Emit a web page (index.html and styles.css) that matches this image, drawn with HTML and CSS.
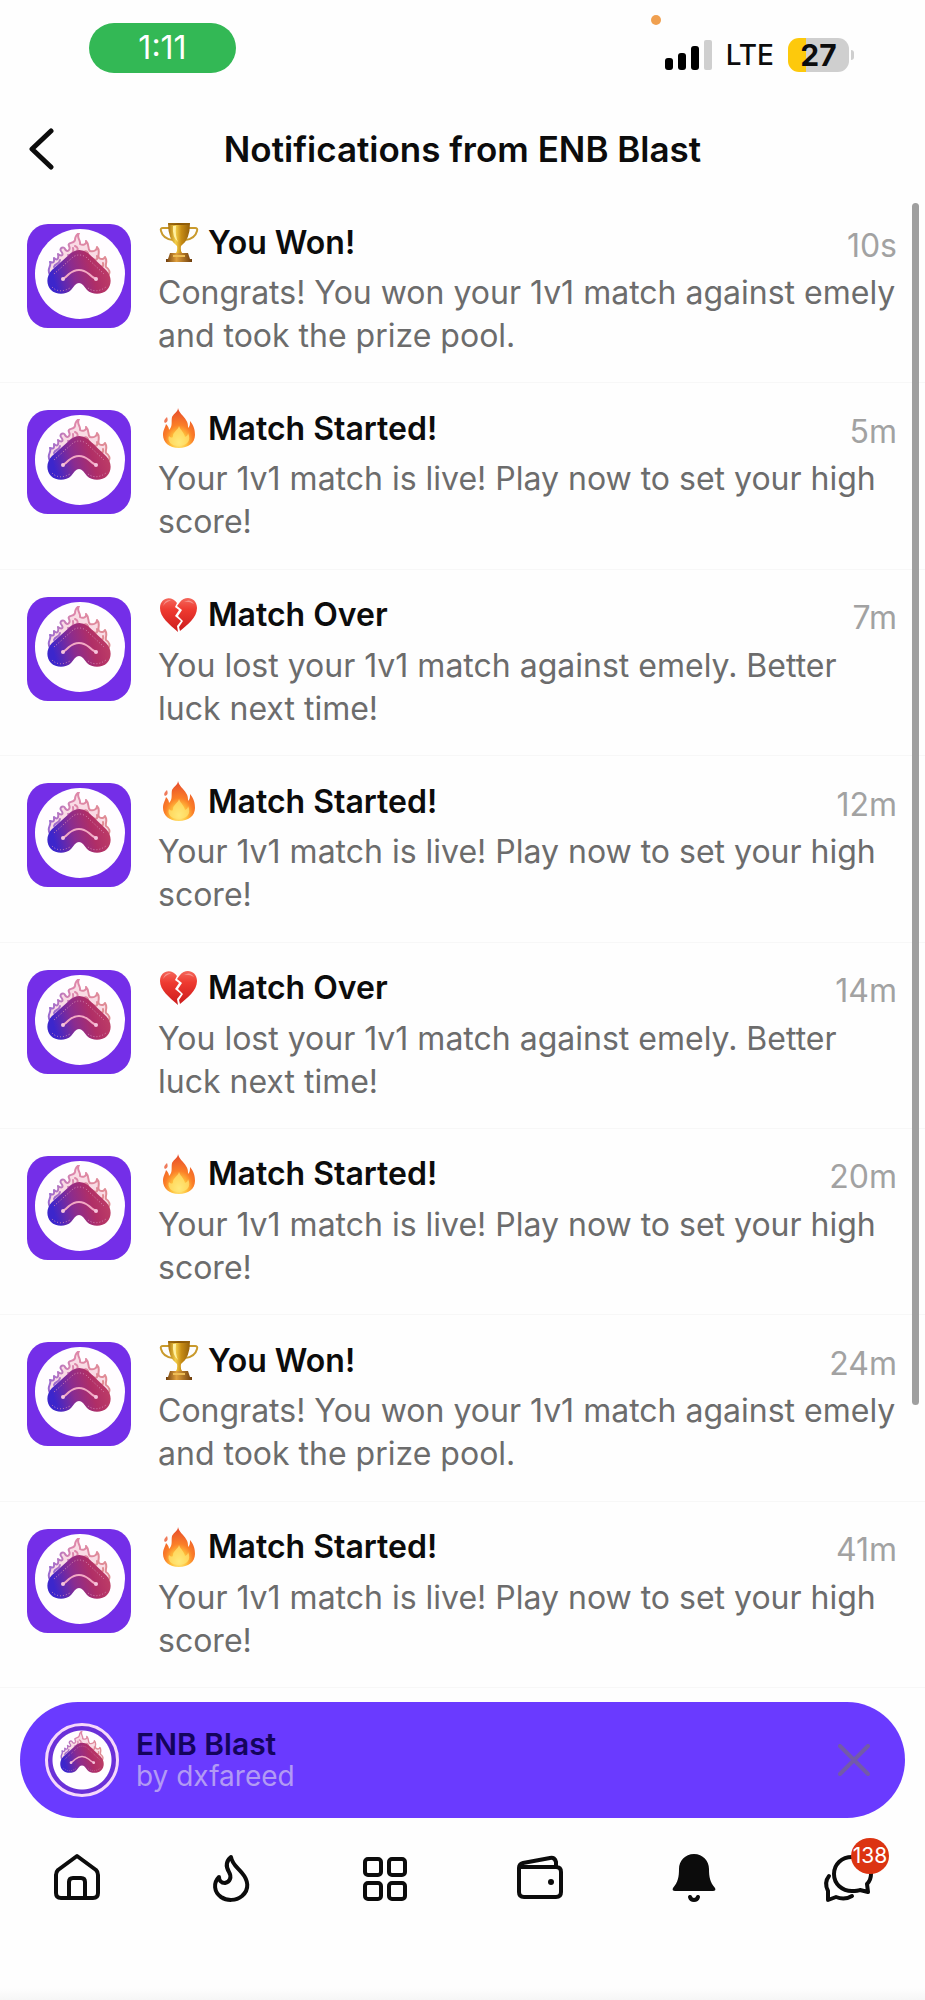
FILE: index.html
```
<!doctype html>
<html lang="en">
<head>
<meta charset="utf-8">
<meta name="viewport" content="width=device-width, initial-scale=1">
<title>Notifications from ENB Blast</title>
<link rel="stylesheet" href="styles.css">
</head>
<body>

<!-- shared icons -->
<svg class="defs" aria-hidden="true">
	<defs>
		<linearGradient id="arch" x1="0" y1="0.6" x2="1" y2="0.4">
			<stop offset="0.08" stop-color="#3c26cc"/>
			<stop offset="0.4" stop-color="#8a2c90"/>
			<stop offset="0.7" stop-color="#b02e66"/>
			<stop offset="1" stop-color="#bf3f66"/>
		</linearGradient>
		<linearGradient id="flames" x1="0" y1="0" x2="1" y2="0">
			<stop offset="0" stop-color="#9a6ad0"/>
			<stop offset="0.4" stop-color="#dd86ac"/>
			<stop offset="1" stop-color="#e08c92"/>
		</linearGradient>
		<linearGradient id="gold" x1="0" y1="0" x2="1" y2="0">
			<stop offset="0" stop-color="#a8700c"/>
			<stop offset="0.35" stop-color="#f4cf4a"/>
			<stop offset="0.6" stop-color="#c88d14"/>
			<stop offset="1" stop-color="#95600a"/>
		</linearGradient>
		<linearGradient id="base" x1="0" y1="0" x2="1" y2="0">
			<stop offset="0" stop-color="#6e3d0c"/>
			<stop offset="0.4" stop-color="#e0a03c"/>
			<stop offset="1" stop-color="#6e3d0c"/>
		</linearGradient>
		<radialGradient id="fire" cx="0.5" cy="0.86" r="0.8">
			<stop offset="0" stop-color="#fff08a"/>
			<stop offset="0.3" stop-color="#ffc23c"/>
			<stop offset="0.55" stop-color="#fb7f28"/>
			<stop offset="1" stop-color="#e8502c"/>
		</radialGradient>
		<linearGradient id="red" x1="0" y1="0" x2="0" y2="1">
			<stop offset="0" stop-color="#f4685c"/>
			<stop offset="0.35" stop-color="#ee3a30"/>
			<stop offset="1" stop-color="#cc1c1c"/>
		</linearGradient>
	</defs>
	<symbol id="logo" viewBox="0 0 64 64">
		<g fill="none" stroke="url(#flames)" stroke-width="2" stroke-linecap="round" stroke-linejoin="round">
			<path fill="#f7ccd8" fill-opacity="0.7" d="M3 42C-1 35 5 34 3 29C8 31 7 27 7 25C10 28 12 26 11 21C15 24 17 22 14 18C12 15 17 13 18 16C20 20 24 17 22 13C20 9 27 11 28 7C28 4 29 2 32 0C29 5 34 7 33 11C36 13 40 11 39 8C43 12 40 15 43 18C47 19 50 17 50 14C54 18 50 22 52 25C55 27 57 26 58 24C61 28 58 31 59 34C62 36 64 39 61 43L32 18Z"/>
			<path d="M7 34C8 30 12 32 13 27M21 22C25 22 27 19 26 15M38 21C36 18 40 17 41 20M45 25C49 28 51 27 50 23M28 13Q32 15 30 18M53 33Q57 35 56 30"/>
		</g>
		<path fill="url(#arch)" d="M24 20Q32 14 41 20L59 37C65 43 65 52 60 57C55 62 45 62 40 57L36 52Q32 48 28 52L24 57C19 62 9 62 4 57C-1 52 -1 43 5 37Z"/>
		<path fill="none" stroke="#d78bb5" stroke-width="1" stroke-dasharray="1 2" d="M7 41L26 24Q32 20 39 24L57 41M5 54Q12 61 23 55M41 55Q49 61 59 54"/>
		<path fill="none" stroke="#f2a9c3" stroke-width="2" stroke-linecap="round" d="M16 46Q19 44 22 41Q32 33 42 41Q45 44 49 46"/>
		<circle cx="16" cy="46" r="2" fill="#f5c4dc"/>
		<circle cx="49" cy="46" r="2" fill="#f5c4dc"/>
	</symbol>
	<symbol id="app" viewBox="0 0 104 104">
		<rect width="104" height="104" rx="21" fill="#742ee8"/>
		<circle cx="53" cy="50" r="45" fill="#fffdff"/>
		<use href="#logo" x="20" y="9" width="64" height="64"/>
	</symbol>
	<symbol id="trophy" viewBox="0 0 40 40">
		<path fill="none" stroke="#c99a2c" stroke-width="2" d="M10 6H4Q1 6 2 9Q4 17 14 18M30 6H36Q39 6 38 9Q36 17 26 18"/>
		<path fill="url(#gold)" d="M9 1H31Q31 18 22 24Q21 29 24 32H16Q19 29 18 24Q9 18 9 1Z"/>
		<path fill="#fff0a0" d="M14 4H17Q16 14 19 20Q13 15 14 4Z"/>
		<ellipse cx="20" cy="2" rx="11" ry="1" fill="#8d5a08"/>
		<path fill="url(#base)" d="M11 31H29L31 37H33V40H7V37H9Z"/>
		<path fill="#edbd55" d="M14 33H26V35H14Z"/>
	</symbol>
	<symbol id="flame" viewBox="0 0 40 40">
		<path fill="url(#fire)" d="M19 0C20 5 25 8 27 12C29 15 29 17 29 20C31 18 31 16 31 13C35 18 36 22 36 27C36 35 29 40 20 40C10 40 4 34 4 27C4 22 6 20 7 16C9 18 10 20 10 22C14 18 12 14 13 9C15 5 19 4 19 0Z"/>
		<path fill="#ffe673" opacity="0.7" d="M20 18C22 23 25 24 26 29C28 28 29 27 29 25C33 33 27 38 20 38C12 38 8 33 10 28C12 30 14 30 14 28C14 24 19 22 20 18Z"/>
		<path fill="#ef7a5a" d="M8 9C9 12 9 14 6 15C4 13 6 11 8 9Z"/>
	</symbol>
	<symbol id="heart" viewBox="0 0 40 40">
		<path fill="url(#red)" d="M18 8C13 0 1 2 1 13C1 22 10 29 19 37L18 31L22 26L16 21L20 15L16 12Z"/>
		<path fill="url(#red)" d="M21 7C26 0 38 2 38 13C38 23 28 30 21 36L20 32L24 26L19 21L23 15L18 11Z"/>
		<path fill="#fff" opacity="0.35" d="M4 11Q6 4 12 5Q7 7 4 11ZM25 7Q31 3 35 9Q30 6 25 7Z"/>
	</symbol>
</svg>

<div class="status">
	<div class="clock">1:11</div>
	<div class="statusRight">
		<span class="mic"></span>
		<svg class="signal" viewBox="0 0 47 30">
			<rect x="0" y="18" width="8" height="12" rx="3"/>
			<rect x="13" y="13" width="8" height="17" rx="3"/>
			<rect x="26" y="6" width="8" height="24" rx="3"/>
			<rect x="39" y="0" width="8" height="30" rx="2" fill="#cfcfcf"/>
		</svg>
		<span class="network">LTE</span>
		<span class="battery">27</span>
	</div>
</div>

<header class="titleBar">
	<button class="back" aria-label="Back">
		<svg viewBox="0 0 26 42"><path d="M23 3L4 21L23 39"/></svg>
	</button>
	<h1>Notifications from ENB Blast</h1>
</header>

<ul class="list">
	<li class="item">
		<svg class="appIcon"><use href="#app"/></svg>
		<div class="text">
			<div class="head"><svg class="emoji"><use href="#trophy"/></svg><h2>You Won!</h2><time>10s</time></div>
			<p>Congrats! You won your 1v1 match against emely and took the prize pool.</p>
		</div>
	</li>
	<li class="item">
		<svg class="appIcon"><use href="#app"/></svg>
		<div class="text">
			<div class="head"><svg class="emoji"><use href="#flame"/></svg><h2>Match Started!</h2><time>5m</time></div>
			<p>Your 1v1 match is live! Play now to set your high score!</p>
		</div>
	</li>
	<li class="item">
		<svg class="appIcon"><use href="#app"/></svg>
		<div class="text">
			<div class="head"><svg class="emoji"><use href="#heart"/></svg><h2>Match Over</h2><time>7m</time></div>
			<p>You lost your 1v1 match against emely. Better luck next time!</p>
		</div>
	</li>
	<li class="item">
		<svg class="appIcon"><use href="#app"/></svg>
		<div class="text">
			<div class="head"><svg class="emoji"><use href="#flame"/></svg><h2>Match Started!</h2><time>12m</time></div>
			<p>Your 1v1 match is live! Play now to set your high score!</p>
		</div>
	</li>
	<li class="item">
		<svg class="appIcon"><use href="#app"/></svg>
		<div class="text">
			<div class="head"><svg class="emoji"><use href="#heart"/></svg><h2>Match Over</h2><time>14m</time></div>
			<p>You lost your 1v1 match against emely. Better luck next time!</p>
		</div>
	</li>
	<li class="item">
		<svg class="appIcon"><use href="#app"/></svg>
		<div class="text">
			<div class="head"><svg class="emoji"><use href="#flame"/></svg><h2>Match Started!</h2><time>20m</time></div>
			<p>Your 1v1 match is live! Play now to set your high score!</p>
		</div>
	</li>
	<li class="item">
		<svg class="appIcon"><use href="#app"/></svg>
		<div class="text">
			<div class="head"><svg class="emoji"><use href="#trophy"/></svg><h2>You Won!</h2><time>24m</time></div>
			<p>Congrats! You won your 1v1 match against emely and took the prize pool.</p>
		</div>
	</li>
	<li class="item">
		<svg class="appIcon"><use href="#app"/></svg>
		<div class="text">
			<div class="head"><svg class="emoji"><use href="#flame"/></svg><h2>Match Started!</h2><time>41m</time></div>
			<p>Your 1v1 match is live! Play now to set your high score!</p>
		</div>
	</li>
</ul>

<section class="miniApp">
	<div class="avatar"><svg><use href="#logo"/></svg></div>
	<div class="miniText">
		<div class="miniName">ENB Blast</div>
		<div class="miniBy">by dxfareed</div>
	</div>
	<button class="close" aria-label="Close">
		<svg viewBox="0 0 32 32"><path d="M2 2L30 30M30 2L2 30"/></svg>
	</button>
</section>

<nav class="tabs">
	<a href="#home" aria-label="Home">
		<svg viewBox="0 0 48 48"><path d="M24 3L5 17Q3 19 3 22V40Q3 45 8 45H40Q45 45 45 40V22Q45 19 43 17ZM16 45V29Q16 25 20 25H28Q32 25 32 29V45"/></svg>
	</a>
	<a href="#trending" aria-label="Trending">
		<svg viewBox="0 0 48 48"><path d="M24 4C18 9 19 14 22 19C25 24 23 29 18 30C14 30 12 27 12 24C6 30 7 39 14 44C20 48 29 48 35 43C43 36 41 27 35 20C30 14 25 11 24 4Z"/></svg>
	</a>
	<a href="#apps" aria-label="Apps">
		<svg viewBox="0 0 48 48"><rect x="4" y="6" width="16" height="16" rx="3"/><rect x="28" y="6" width="16" height="16" rx="3"/><rect x="4" y="30" width="16" height="16" rx="3"/><rect x="28" y="30" width="16" height="16" rx="3"/></svg>
	</a>
	<a href="#wallet" aria-label="Wallet">
		<svg viewBox="0 0 48 48"><path d="M4 14H40Q45 14 45 19V39Q45 44 40 44H8Q3 44 3 39V15Q3 11 7 10L34 5Q39 4 40 9V13"/><circle class="solid" cx="35" cy="29" r="3"/></svg>
	</a>
	<a href="#notifications" aria-label="Notifications" aria-current="page">
		<svg viewBox="0 0 48 48"><path class="solid" d="M24 1C15 1 9 8 9 16C9 24 8 29 3 35C2 37 3 38 5 38H43C45 38 46 37 45 35C40 29 39 24 39 16C39 8 33 1 24 1Z"/><path d="M20 44Q21 47 24 47Q27 47 28 44"/></svg>
	</a>
	<a href="#messages" aria-label="Messages">
		<svg viewBox="0 0 48 48"><path d="M28 4C18 4 10 11 10 21C10 31 18 38 28 38C31 38 34 38 36 37L44 39L43 31C46 28 47 25 47 21C47 11 38 4 28 4ZM5 23C1 28 2 34 4 38V47L12 44C17 46 23 46 28 43"/></svg>
		<span class="badge">138</span>
	</a>
</nav>

</body>
</html>
```
FILE: styles.css
```
* {
	box-sizing: border-box;
}

body {
	position: relative;
	display: flex;
	flex-direction: column;
	margin: 0px;
	min-height: 100vh;
	font-family: Inter, "Liberation Sans", sans-serif;
	font-size: 32px;
	color: #0c0c0c;
	background: linear-gradient(to top, #f6f6f6, #fefefe 12px);
}

h1, h2, p, ul {
	margin: 0px;
	padding: 0px;
}

button {
	display: flex;
	padding: 0px;
	border: none;
	background: none;
	cursor: pointer;
}

.defs {
	position: absolute;
	width: 0px;
	height: 0px;
}

/* status bar */

.status {
	display: flex;
	justify-content: space-between;
	align-items: flex-start;
	height: 101px;
	padding: 23px 76px 0px 89px;
}

.clock {
	width: 147px;
	line-height: 50px;
	border-radius: 25px;
	text-align: center;
	color: #fff;
	background-color: #33b855;
}

.statusRight {
	position: relative;
	display: flex;
	align-items: center;
	gap: 14px;
	padding-top: 15px;
}

.mic {
	position: absolute;
	top: -8px;
	left: -14px;
	width: 10px;
	height: 10px;
	border-radius: 50%;
	background-color: #f0a050;
}

.signal {
	width: 47px;
	height: 30px;
}

.network {
	font-size: 28px;
	font-weight: 500;
	line-height: 34px;
}

.battery {
	position: relative;
	width: 61px;
	line-height: 34px;
	border-radius: 11px;
	text-align: center;
	font-size: 30px;
	font-weight: 700;
	background: linear-gradient(to right, #fdc90c 18px, #cfcfcf 18px);
}

.battery::after {
	content: "";
	position: absolute;
	top: 12px;
	right: -5px;
	width: 3px;
	height: 10px;
	border-radius: 0px 3px 3px 0px;
	background-color: #cfcfcf;
}

/* title bar */

.titleBar {
	display: grid;
	grid-template-columns: 80px 1fr 80px;
	align-items: center;
	height: 96px;
}

.titleBar h1 {
	text-align: center;
	font-size: 35px;
	font-weight: 600;
}

.back {
	padding-left: 28px;
}

.back svg {
	width: 26px;
	height: 42px;
	fill: none;
	stroke: #0c0c0c;
	stroke-width: 5px;
	stroke-linecap: round;
	stroke-linejoin: round;
}

/* notifications */

.list {
	position: relative;
	flex: 1;
	display: grid;
	grid-auto-rows: 1fr;
	list-style: none;
}

/* scroll thumb */
.list::after {
	content: "";
	position: absolute;
	top: 6px;
	right: 6px;
	width: 7px;
	height: calc(80% + 9px);
	border-radius: 4px;
	background-color: #9f9f9f;
}

.item {
	display: flex;
	align-items: flex-start;
	gap: 27px;
	padding: 27px 28px 25px 27px;
	border-bottom: 1px solid #f7f7f7;
}

.appIcon {
	flex: none;
	width: 104px;
	height: 104px;
}

.text {
	flex: 1;
}

.head {
	display: flex;
	align-items: center;
	height: 36px;
}

.emoji {
	width: 40px;
	height: 40px;
	margin: 0px 9px 0px 1px;
}

.head h2 {
	flex: 1;
	font-size: 32px;
	font-weight: 600;
}

.head time {
	padding-top: 6px;
	color: #a2a2a2;
}

.text p {
	margin-top: 11px;
	margin-right: -10px;
	line-height: 43px;
	color: #6c6c6c;
}

/* running mini app */

.miniApp {
	display: flex;
	align-items: center;
	height: 116px;
	margin: 14px 20px 0px 20px;
	padding: 0px 35px 0px 25px;
	border-radius: 58px;
	background-color: #6a3aff;
}

.avatar {
	display: flex;
	justify-content: center;
	align-items: center;
	width: 74px;
	height: 74px;
	border: 3px solid #f6d8fb;
	border-radius: 50%;
	background: radial-gradient(circle, #fffdff 29px, #6a30d8 30px);
}

.avatar svg {
	width: 44px;
	height: 44px;
	margin-bottom: 14px;
}

.miniText {
	flex: 1;
	padding-left: 17px;
}

.miniName {
	font-size: 30px;
	font-weight: 600;
	line-height: 32px;
	color: #14045c;
}

.miniBy {
	font-size: 28px;
	line-height: 32px;
	color: #b29af4;
}

.close svg {
	width: 32px;
	height: 32px;
	fill: none;
	stroke: #735aa8;
	stroke-width: 4px;
	stroke-linecap: round;
}

/* bottom tabs */

.tabs {
	display: grid;
	grid-template-columns: repeat(6, 1fr);
	justify-items: center;
	height: 182px;
	padding-top: 35px;
}

.tabs a {
	position: relative;
	width: 48px;
	height: 48px;
	color: #0c0c0c;
}

.tabs svg {
	display: block;
	width: 48px;
	height: 48px;
	overflow: visible;
	fill: none;
	stroke: currentColor;
	stroke-width: 4px;
	stroke-linecap: round;
	stroke-linejoin: round;
}

.tabs .solid {
	fill: currentColor;
	stroke: none;
}

.badge {
	position: absolute;
	top: -15px;
	left: 27px;
	width: 38px;
	line-height: 36px;
	border-radius: 50%;
	text-align: center;
	font-size: 21px;
	color: #fff;
	background-color: #dc3412;
}
```
